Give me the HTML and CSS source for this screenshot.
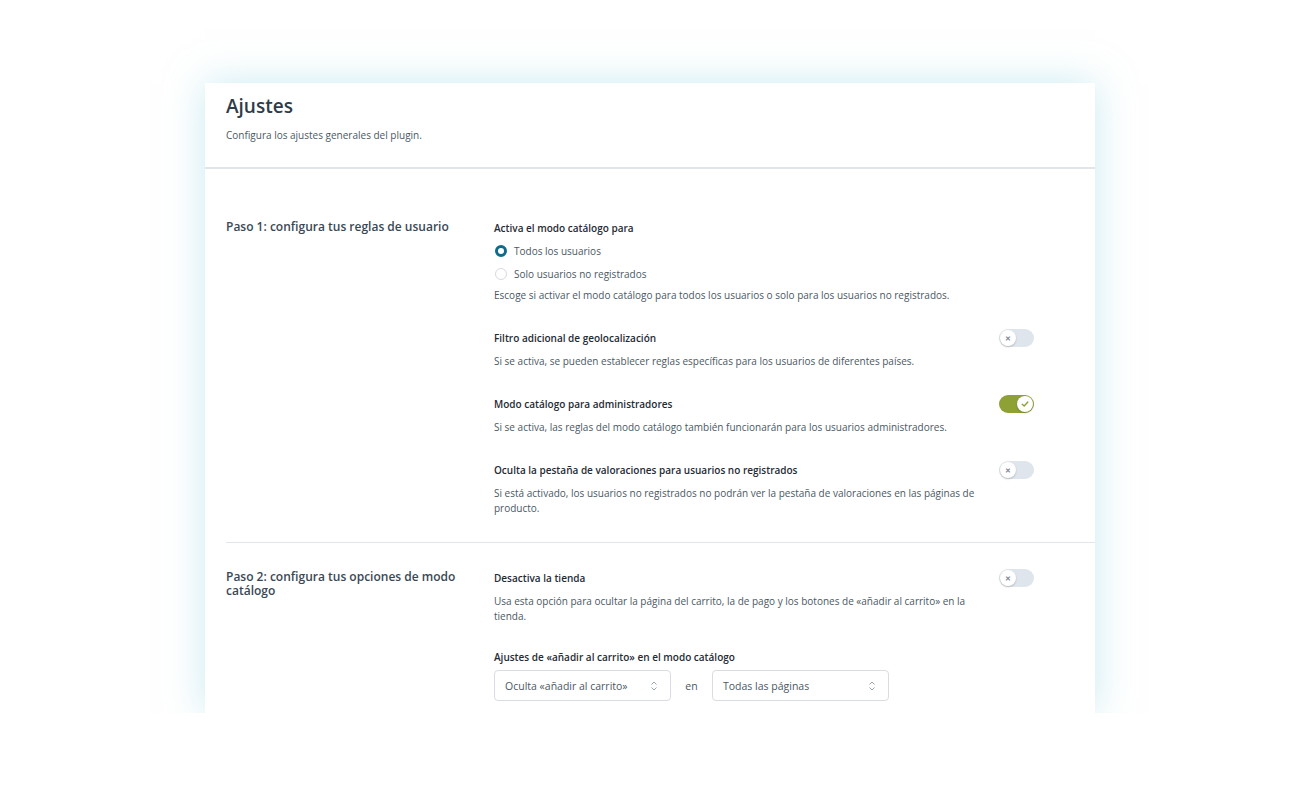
FILE: index.html
```html
<!DOCTYPE html>
<html lang="es">
<head>
    <meta charset="UTF-8">
    <meta name="viewport" content="width=device-width, initial-scale=1.0">
    <title>Ajustes</title>
    <link rel="stylesheet" href="styles.css">
</head>
<body>
    <div class="panel">
        <div class="panel-header">
            <h1>Ajustes</h1>
            <p>Configura los ajustes generales del plugin.</p>
        </div>

        <!-- Paso 1 -->
        <div class="section first">
            <div class="section-title">Paso 1: configura tus reglas de usuario</div>
            <div class="section-body">
                <div class="option">
                    <div class="option-text">
                        <div class="option-label">Activa el modo catálogo para</div>
                        <div class="radios">
                            <label class="radio"><span class="dot checked"></span>Todos los usuarios</label>
                            <label class="radio"><span class="dot"></span>Solo usuarios no registrados</label>
                        </div>
                        <div class="option-desc">Escoge si activar el modo catálogo para todos los usuarios o solo para los usuarios no registrados.</div>
                    </div>
                </div>

                <div class="option">
                    <div class="option-text">
                        <div class="option-label">Filtro adicional de geolocalización</div>
                        <div class="option-desc">Si se activa, se pueden establecer reglas específicas para los usuarios de diferentes países.</div>
                    </div>
                    <span class="toggle"><span class="knob">✕</span></span>
                </div>

                <div class="option">
                    <div class="option-text">
                        <div class="option-label">Modo catálogo para administradores</div>
                        <div class="option-desc">Si se activa, las reglas del modo catálogo también funcionarán para los usuarios administradores.</div>
                    </div>
                    <span class="toggle on">
                        <span class="knob">
                            <svg width="8" height="8" viewBox="0 0 8 8"><path d="M1.2 4.2 L3.2 6 L6.8 2" fill="none" stroke="#8ea135" stroke-width="1.4" stroke-linecap="round" stroke-linejoin="round"/></svg>
                        </span>
                    </span>
                </div>

                <div class="option">
                    <div class="option-text">
                        <div class="option-label">Oculta la pestaña de valoraciones para usuarios no registrados</div>
                        <div class="option-desc">Si está activado, los usuarios no registrados no podrán ver la pestaña de valoraciones en las páginas de producto.</div>
                    </div>
                    <span class="toggle"><span class="knob">✕</span></span>
                </div>
            </div>
        </div>

        <!-- Paso 2 -->
        <div class="section">
            <div class="section-title">Paso 2: configura tus opciones de modo catálogo</div>
            <div class="section-body tight">
                <div class="option">
                    <div class="option-text">
                        <div class="option-label">Desactiva la tienda</div>
                        <div class="option-desc">Usa esta opción para ocultar la página del carrito, la de pago y los botones de «añadir al carrito» en la tienda.</div>
                    </div>
                    <span class="toggle"><span class="knob">✕</span></span>
                </div>

                <div class="option">
                    <div class="option-text">
                        <div class="option-label">Ajustes de «añadir al carrito» en el modo catálogo</div>
                        <div class="selects">
                            <div class="select">Oculta «añadir al carrito»
                                <svg width="8" height="12" viewBox="0 0 8 12"><path d="M1.5 4.5 L4 2 L6.5 4.5 M1.5 7.5 L4 10 L6.5 7.5" fill="none" stroke="#9aa4ad" stroke-width="1"/></svg>
                            </div>
                            <span class="sep">en</span>
                            <div class="select">Todas las páginas
                                <svg width="8" height="12" viewBox="0 0 8 12"><path d="M1.5 4.5 L4 2 L6.5 4.5 M1.5 7.5 L4 10 L6.5 7.5" fill="none" stroke="#9aa4ad" stroke-width="1"/></svg>
                            </div>
                        </div>
                    </div>
                </div>
            </div>
        </div>
    </div>
</body>
</html>
```

FILE: styles.css
```css
body {
    margin: 0;
    background: #fff;
    font-family: 'Open Sans', 'Noto Sans', Arial, sans-serif;
    color: #4b5864;
}

.panel {
    width: 890px;
    height: 630px;
    margin: 83px auto 0;
    background: #fff;
    box-shadow: 0 0 36px rgba(150, 215, 230, 0.5);
    overflow: hidden;
}

.panel-header {
    padding: 10px 21px 0;
    height: 74px;
    border-bottom: 2px solid #e2e5e8;
}

.panel-header h1 {
    margin: 0;
    font-size: 19px;
    font-weight: 600;
    line-height: 26px;
    color: #2f3c48;
}

.panel-header p {
    margin: 9px 0 0;
    font-size: 10px;
    line-height: 14px;
    color: #4b5864;
}

.section {
    display: flex;
    margin-left: 21px;
    padding: 27px 0 26px;
    border-bottom: 1px solid #e3e6e9;
}

.section.first {
    padding-top: 51px;
}

.section-title {
    width: 246px;
    padding-right: 22px;
    font-size: 12px;
    font-weight: 600;
    line-height: 14px;
    color: #3a4855;
}

.section-body {
    width: 540px;
    display: flex;
    flex-direction: column;
    gap: 27px;
}

.section-body.tight {
    gap: 25px;
}

.option {
    display: flex;
    justify-content: space-between;
    align-items: flex-start;
}

.option-text {
    width: 484px;
}

.option-label {
    font-size: 10px;
    font-weight: 600;
    line-height: 16px;
    color: #1f2b35;
}

.option-desc {
    margin-top: 8px;
    font-size: 10px;
    line-height: 15px;
    color: #4b5864;
}

.radios {
    margin-top: 3px;
}

.radio {
    display: flex;
    align-items: center;
    height: 23px;
    font-size: 10px;
    color: #4b5864;
}

.radios + .option-desc {
    margin-top: 3px;
}

.dot {
    width: 12px;
    height: 12px;
    margin: 0 7px 0 1px;
    border: 1px solid #d5dadf;
    border-radius: 50%;
    box-sizing: border-box;
    background: #fff;
}

.dot.checked {
    border: 3.5px solid #0f6a8b;
}

.toggle {
    position: relative;
    width: 35px;
    height: 18px;
    margin-top: -1px;
    border-radius: 9px;
    background: #dfe5ec;
    flex-shrink: 0;
}

.knob {
    position: absolute;
    top: 1px;
    left: 1px;
    width: 16px;
    height: 16px;
    border-radius: 50%;
    background: #fff;
    box-shadow: 0 1px 2px rgba(0, 0, 0, 0.2);
    display: flex;
    align-items: center;
    justify-content: center;
    font-size: 7px;
    font-weight: bold;
    color: #7d8894;
}

.toggle.on {
    background: #8ea135;
}

.toggle.on .knob {
    left: 18px;
}

.selects {
    display: flex;
    align-items: center;
    margin-top: 5px;
}

.select {
    width: 177px;
    height: 31px;
    box-sizing: border-box;
    padding: 0 12px 0 10px;
    border: 1px solid #d9dde1;
    border-radius: 4px;
    display: flex;
    align-items: center;
    justify-content: space-between;
    font-size: 10.5px;
    color: #4b5864;
}

.sep {
    width: 41px;
    text-align: center;
    font-size: 10.5px;
    color: #4b5864;
}
```
